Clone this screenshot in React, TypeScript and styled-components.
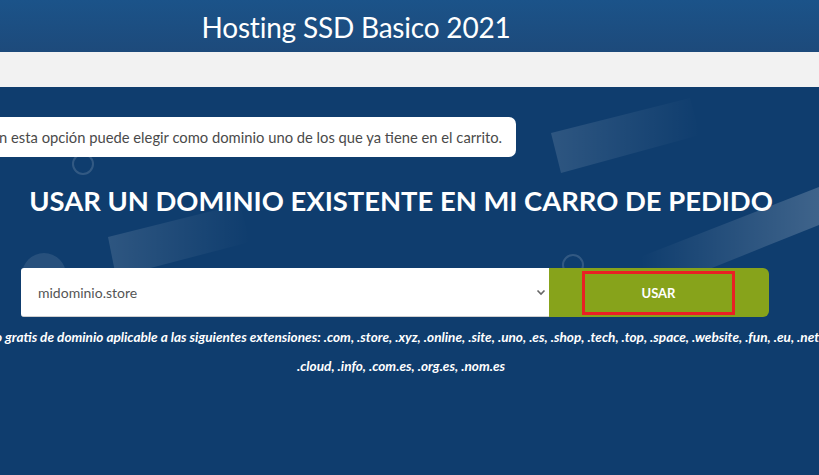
import React from "react";
import styled, { createGlobalStyle } from "styled-components";

const Global = createGlobalStyle`
  html, body { margin: 0; padding: 0; }
  body {
    width: 819px;
    height: 475px;
    overflow: hidden;
    background: #0f3d6e;
    font-family: Lato, "Open Sans", "Liberation Sans", sans-serif;
  }
`;

const Page = styled.div`
  display: flex;
  flex-direction: column;
  width: 819px;
  height: 475px;
  overflow: hidden;
`;

const Header = styled.header`
  height: 52px;
  display: flex;
  align-items: center;
  justify-content: center;
  padding-right: 107px;
  background: linear-gradient(180deg, #1b5389 0%, #1d4a7b 100%);
`;

const Title = styled.h1`
  margin: 0;
  color: #ffffff;
  font-size: 28px;
  font-weight: 400;
  letter-spacing: -0.2px;
  line-height: 1;
  padding-top: 1px;
`;

const GrayBar = styled.div`
  height: 35px;
  background: #f2f2f2;
`;

const Main = styled.main`
  position: relative;
  flex: 1;
  background: #0f3d6e;
  padding-top: 30px;
`;

const Deco = styled.svg`
  position: absolute;
  inset: 0;
  width: 819px;
  height: 388px;
  pointer-events: none;
`;

const Content = styled.div`
  position: relative;
  width: 802px;
  display: flex;
  flex-direction: column;
`;

const Notice = styled.div`
  align-self: flex-start;
  margin-left: -19px;
  height: 40px;
  display: flex;
  align-items: center;
  padding: 0 14px 0 0;
  background: #ffffff;
  border-radius: 0 7px 7px 0;
  color: #4a4a4a;
  font-size: 14.75px;
  white-space: nowrap;
`;

const Heading = styled.h2`
  margin: 26px 0 0;
  text-align: center;
  color: #ffffff;
  font-size: 27.4px;
  font-weight: 700;
  line-height: 36px;
  white-space: nowrap;
`;

const FormRow = styled.div`
  display: flex;
  margin: 49px 0 0 21px;
  width: 748px;
  height: 49px;
`;

const SelectBox = styled.div`
  flex: 0 0 528px;
  display: flex;
  align-items: center;
  justify-content: space-between;
  background: #ffffff;
  border-radius: 3px 0 0 3px;
  border-bottom: 1px solid #cfcfcf;
  box-sizing: border-box;
  padding: 0 2px 0 17px;
  color: #555555;
  font-size: 14px;
`;

const ButtonCell = styled.div`
  flex: 1;
  display: flex;
  align-items: center;
  padding-left: 33px;
  background: #87a31b;
  border-radius: 0 6px 6px 0;
`;

const UseButton = styled.button`
  width: 153px;
  height: 44px;
  box-sizing: border-box;
  border: 3px solid #ea2024;
  background: #87a31b;
  color: #ffffff;
  font-family: inherit;
  font-size: 13px;
  font-weight: 700;
  padding: 0;
  cursor: pointer;
`;

const Footnote = styled.p`
  margin: 6px 0 0 -99px;
  width: 1000px;
  text-align: center;
  color: #ffffff;
  font-size: 13.6px;
  font-style: italic;
  font-weight: 700;
  line-height: 29px;
  white-space: nowrap;
`;

const FirstLine = styled.span`
  display: inline-block;
  margin-left: -40px;
`;

const Chevron = () => (
  <svg width="12" height="12" viewBox="0 0 12 12">
    <path d="M2.5 4.5 L6 8 L9.5 4.5" fill="none" stroke="#666" strokeWidth="1.6" />
  </svg>
);

export default function App() {
  return (
    <Page>
      <Global />
      <Header>
        <Title>Hosting SSD Basico 2021</Title>
      </Header>
      <GrayBar />
      <Main>
        <Deco viewBox="0 0 819 388">
          <defs>
            <linearGradient id="fadeR" x1="0" x2="1" y1="0" y2="0">
              <stop offset="0" stopColor="#ffffff" stopOpacity="0.13" />
              <stop offset="1" stopColor="#ffffff" stopOpacity="0" />
            </linearGradient>
            <linearGradient id="fadeL" x1="0" x2="1" y1="0" y2="0">
              <stop offset="0" stopColor="#ffffff" stopOpacity="0" />
              <stop offset="1" stopColor="#ffffff" stopOpacity="0.2" />
            </linearGradient>
          </defs>
          <polygon points="551,46 690,11 700,48 561,86" fill="url(#fadeR)" />
          <polygon points="108,150 240,117 250,155 116,190" fill="url(#fadeR)" />
          <polygon points="640,170 819,100 819,138 652,205" fill="url(#fadeL)" />
          <circle cx="44" cy="188" r="22" fill="#ffffff" fillOpacity="0.1" />
          <circle cx="83" cy="77" r="10" fill="none" stroke="#ffffff" strokeOpacity="0.15" strokeWidth="2" />
          <circle cx="573" cy="178" r="10" fill="none" stroke="#ffffff" strokeOpacity="0.15" strokeWidth="2" />
        </Deco>
        <Content>
          <Notice>Con esta opción puede elegir como dominio uno de los que ya tiene en el carrito.</Notice>
          <Heading>USAR UN DOMINIO EXISTENTE EN MI CARRO DE PEDIDO</Heading>
          <FormRow>
            <SelectBox>
              <span>midominio.store</span>
              <Chevron />
            </SelectBox>
            <ButtonCell>
              <UseButton>USAR</UseButton>
            </ButtonCell>
          </FormRow>
          <Footnote>
            <FirstLine>
              Primer año gratis de dominio aplicable a las siguientes extensiones: .com, .store, .xyz, .online, .site, .uno, .es, .shop, .tech, .top, .space, .website, .fun, .eu, .net,
            </FirstLine>
            <br />
            .cloud, .info, .com.es, .org.es, .nom.es
          </Footnote>
        </Content>
      </Main>
    </Page>
  );
}
